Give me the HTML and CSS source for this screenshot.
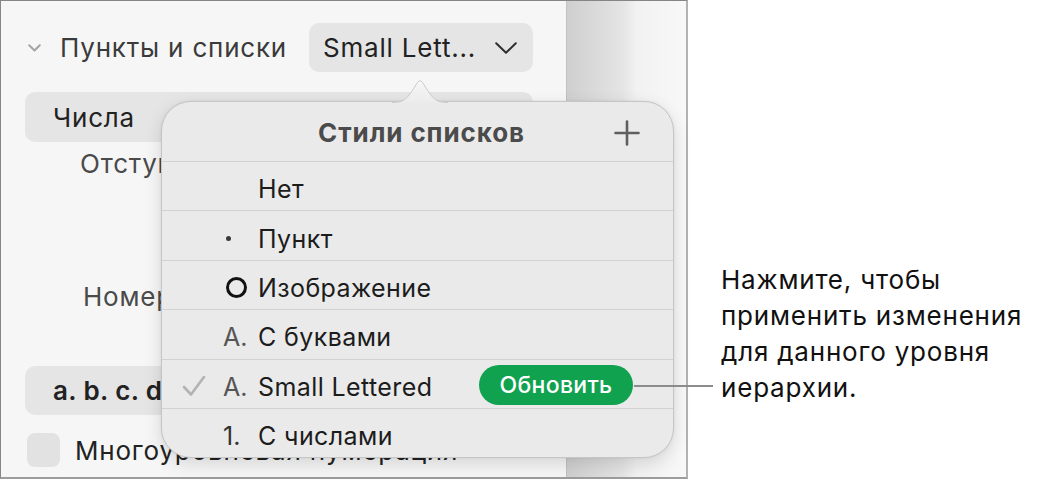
FILE: index.html
```html
<!DOCTYPE html>
<html lang="ru">
<head>
<meta charset="utf-8">
<title>Стили списков</title>
<link rel="stylesheet" href="styles.css">
</head>
<body>
<div class="page">
  <div class="window">
    <aside class="sidebar">
      <div class="section-head">
        <svg class="disclosure" viewBox="0 0 13 8" width="13" height="8"><polyline points="1.2,1.2 6.5,6.5 11.8,1.2" fill="none" stroke="#a4a4a4" stroke-width="2" stroke-linecap="round" stroke-linejoin="round"/></svg>
        <span class="section-title">Пункты и списки</span>
        <div class="popup-btn">
          <span>Small Lett...</span>
          <svg class="popup-chevron" viewBox="0 0 22 12" width="22" height="12"><polyline points="1.2,1.2 11,10.8 20.8,1.2" fill="none" stroke="#2f2f2f" stroke-width="2" stroke-linecap="round" stroke-linejoin="round"/></svg>
        </div>
      </div>
      <div class="select select-type">Числа</div>
      <div class="field-row field-indent"><span class="field-label">Отступ</span></div>
      <div class="field-row field-start"><span class="field-label">Номер</span></div>
      <div class="select select-format">a. b. c. d.</div>
      <div class="check-row"><span class="checkbox"></span><span class="check-label">Многоуровневая нумерация</span></div>
    </aside>
    <div class="window-edge"></div>

    <div class="popover">
      <svg class="popover-arrow" viewBox="0 0 56 24" width="56" height="24">
        <defs>
          <linearGradient id="arrowFill" x1="0" y1="0" x2="0" y2="1">
            <stop offset="0" stop-color="#f6f6f6"/>
            <stop offset="1" stop-color="#ebebeb"/>
          </linearGradient>
        </defs>
        <path d="M0,24 C10,24 14,21 19,14 L25.5,4 Q28,0.5 30.5,4 L37,14 C42,21 46,24 56,24 Z" fill="url(#arrowFill)"/>
        <path d="M0,23.5 C10,23.5 14,20.5 19,13.5 L25.5,3.5 Q28,0 30.5,3.5 L37,13.5 C42,20.5 46,23.5 56,23.5" fill="none" stroke="#cbcbcb" stroke-width="1"/>
      </svg>
      <div class="pop-head">
        <span class="pop-title">Стили списков</span>
        <svg class="pop-add" viewBox="0 0 26 26" width="26" height="26"><path d="M13 1.5V24.5M1.5 13H24.5" stroke="#5f5f5f" stroke-width="2.6" stroke-linecap="round"/></svg>
      </div>
      <div class="pop-row">
        <span class="check"></span><span class="marker"></span><span class="label">Нет</span>
      </div>
      <div class="pop-row">
        <span class="check"></span><span class="marker"><span class="dot"></span></span><span class="label">Пункт</span>
      </div>
      <div class="pop-row">
        <span class="check"></span><span class="marker"><span class="ring"></span></span><span class="label">Изображение</span>
      </div>
      <div class="pop-row">
        <span class="check"></span><span class="marker marker-letter">A.</span><span class="label">С буквами</span>
      </div>
      <div class="pop-row">
        <span class="check"><svg viewBox="0 0 24 22" width="24" height="22"><polyline points="2,12 9,19.5 22,2" fill="none" stroke="#b3b3b3" stroke-width="2.6" stroke-linecap="round" stroke-linejoin="round"/></svg></span>
        <span class="marker marker-letter">A.</span><span class="label">Small Lettered</span>
        <span class="update-btn">Обновить</span>
      </div>
      <div class="pop-row pop-row-last">
        <span class="check"></span><span class="marker marker-num">1.</span><span class="label">С числами</span>
      </div>
    </div>
  </div>

  <div class="callout">
    <p class="callout-text">Нажмите, чтобы<br>применить изменения<br>для данного уровня<br>иерархии.</p>
  </div>
  <span class="leader"></span>
</div>
</body>
</html>
```

FILE: styles.css
```css
* {
  box-sizing: border-box;
}

body {
  margin: 0;
  background: #ffffff;
  font-family: Inter, "Noto Sans", sans-serif;
  font-size: 26px;
  letter-spacing: 0.8px;
  color: #1c1c1c;
}

.page {
  position: relative;
  display: flex;
  width: 1043px;
  height: 481px;
}

/* window frame with the inspector sidebar */
.window {
  position: relative;
  display: flex;
  flex: none;
  width: 688px;
  height: 479px;
  border: 1px solid #858585;
  border-right: 2px solid #b2b2b2;
  border-bottom: 2px solid #9c9c9c;
}

.sidebar {
  width: 566px;
  flex: none;
  background: #f6f6f6;
  border-right: 1px solid #c2c2c2;
  padding: 22px 33px 0 24px;
  overflow: hidden;
}

.window-edge {
  flex: 1;
  background: linear-gradient(to right, #cfcfcf 0, #e4e4e4 55px, #f2f2f2 70px, #f8f8f8 100%);
}

.section-head {
  display: flex;
  align-items: center;
  height: 49px;
}

.disclosure {
  flex: none;
  margin: 0 19px 0 3px;
}

.section-title {
  flex: 1;
  color: #3b3b3b;
  white-space: nowrap;
}

.popup-btn {
  display: flex;
  align-items: center;
  justify-content: space-between;
  width: 224px;
  height: 49px;
  padding: 0 16px 0 14px;
  background: #e5e5e5;
  border-radius: 10px;
  color: #222;
  white-space: nowrap;
}

.select {
  display: flex;
  align-items: center;
  height: 50px;
  margin-top: 20px;
  padding-left: 28px;
  background: #e5e5e5;
  border-radius: 10px;
  color: #222;
}

.select-format {
  height: 49px;
  margin-top: 49px;
  font-weight: 600;
  letter-spacing: 0.4px;
}

.field-row {
  display: flex;
  align-items: center;
  height: 42px;
  color: #4a4a4a;
  white-space: nowrap;
}

.field-indent {
  padding-left: 55px;
}

.field-start {
  margin-top: 91px;
  padding-left: 58px;
}

.check-row {
  display: flex;
  align-items: center;
  height: 34px;
  margin-top: 18px;
  padding-left: 2px;
  white-space: nowrap;
}

.checkbox {
  flex: none;
  width: 33px;
  height: 34px;
  margin-right: 15px;
  background: #e2e2e2;
  border-radius: 8px;
}

.check-label {
  color: #222;
}

/* list styles popover */
.popover {
  position: absolute;
  left: 160px;
  top: 100px;
  width: 513px;
  height: 357px;
  display: flex;
  flex-direction: column;
  background: #eaeaea;
  border: 1px solid #c6c6c6;
  border-radius: 30px;
  box-shadow: 0 6px 18px rgba(0, 0, 0, 0.13), 0 0 3px rgba(0, 0, 0, 0.07);
  font-size: 25px;
  letter-spacing: 0.4px;
}

.popover-arrow {
  position: absolute;
  top: -23px;
  left: 230px;
}

.pop-head {
  display: grid;
  grid-template-columns: 1fr auto 1fr;
  align-items: center;
  height: 59px;
  flex: none;
  padding: 2px 0 0 8px;
}

.pop-title {
  grid-column: 2;
  font-size: 26px;
  font-weight: 700;
  letter-spacing: 0.9px;
  color: #4b4b4b;
}

.pop-add {
  grid-column: 3;
  justify-self: end;
  margin-right: 33px;
}

.pop-row {
  display: flex;
  align-items: center;
  height: 49.4px;
  flex: none;
  padding: 6px 40px 0 20px;
  border-top: 1px solid #d2d2d2;
}

.pop-row-last {
  flex: 1;
}

.check {
  display: flex;
  align-items: center;
  flex: none;
  width: 41px;
  margin-top: -2px;
}

.marker {
  display: flex;
  align-items: center;
  flex: none;
  width: 35px;
}

.marker-letter {
  color: #555;
  letter-spacing: 0;
}

.marker-num {
  color: #333;
  letter-spacing: 0;
}

.dot {
  width: 5px;
  height: 5px;
  margin-left: 3px;
  border-radius: 50%;
  background: #3a3a3a;
}

.ring {
  width: 21px;
  height: 21px;
  margin-left: 3px;
  border: 3px solid #111;
  border-radius: 50%;
}

.label {
  flex: 1;
  color: #1c1c1c;
  white-space: nowrap;
}

.update-btn {
  display: flex;
  align-items: center;
  justify-content: center;
  width: 154px;
  height: 40px;
  margin-top: -4px;
  background: #10a24f;
  border-radius: 20px;
  color: #fff;
  font-size: 23px;
  font-weight: 500;
  letter-spacing: 0.3px;
}

/* annotation */
.callout {
  flex: 1;
  padding-left: 33px;
}

.callout-text {
  margin: 262px 0 0;
  font-size: 26px;
  line-height: 36px;
  letter-spacing: 0.8px;
  color: #111;
  white-space: nowrap;
}

.leader {
  position: absolute;
  left: 634px;
  top: 385px;
  width: 79px;
  height: 2px;
  background: #8c8c8c;
}
```
